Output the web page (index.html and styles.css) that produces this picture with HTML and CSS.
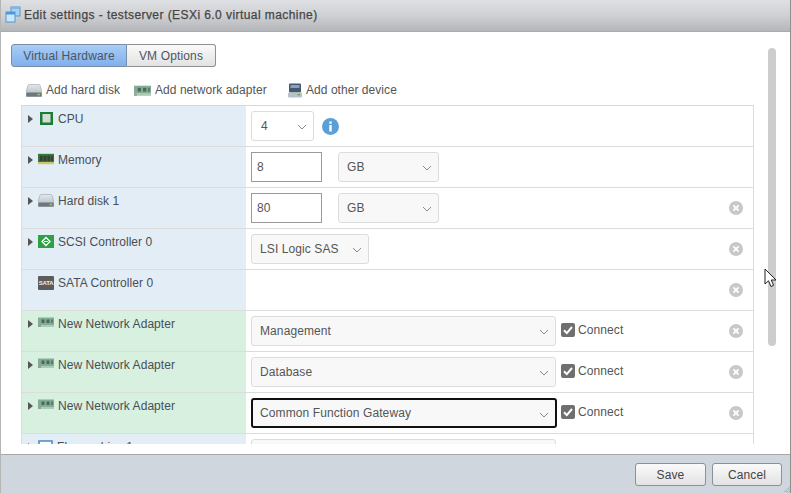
FILE: index.html
```html
<!DOCTYPE html>
<html lang="en">
<head>
<meta charset="utf-8">
<title>Edit settings - testserver</title>
<link rel="stylesheet" href="styles.css">
</head>
<body>
<svg class="defs" width="0" height="0" aria-hidden="true">
  <defs>
    <linearGradient id="diskTop" x1="0" y1="0" x2="0" y2="1"><stop offset="0" stop-color="#e4e8ec"/><stop offset="1" stop-color="#aeb5bc"/></linearGradient>
  </defs>
  <symbol id="chev" viewBox="0 0 10 6"><path d="M1 1l4 4 4-4" fill="none" stroke="#8a8a8a" stroke-width="1"/></symbol>
  <symbol id="nic" viewBox="0 0 16 10">
    <rect x="0" y="0.5" width="16" height="7.5" fill="#7fae93"/><rect x="0" y="8" width="3" height="2" fill="#9a9a9a"/><rect x="3" y="8" width="13" height="2" fill="#a9cdb6"/>
    <rect x="3.5" y="2.5" width="3" height="3.5" fill="#56625d"/><rect x="8.5" y="2.5" width="3" height="3.5" fill="#56625d"/><rect x="13" y="2.5" width="2" height="3.5" fill="#5f7a6a"/>
  </symbol>
  <symbol id="disk" viewBox="0 0 16 13">
    <path d="M3.2.5h9.6c.6 0 1 .3 1.2.8L16 8v3.5c0 .8-.5 1.3-1.2 1.3H1.2C.5 12.800 0 12.300 0 11.500V8l2-6.700C2.200.8 2.600.5 3.200.5z" fill="url(#diskTop)" stroke="#8d949b" stroke-width=".5"/>
    <rect x="0.400" y="8.500" width="15.200" height="4" rx="1" fill="#6d7781"/><rect x="11.500" y="9.800" width="2.500" height="1.500" fill="#8fd05a"/>
  </symbol>
  <symbol id="x" viewBox="0 0 14 14">
    <circle cx="7" cy="7" r="7" fill="#c8c8c8"/><path d="M4.400 4.400l5.200 5.200M9.600 4.400l-5.200 5.200" stroke="#fff" stroke-width="1.800"/>
  </symbol>
  <symbol id="check" viewBox="0 0 14 14">
    <rect width="14" height="14" rx="2" fill="#6f6f6f"/><path d="M3 7.300l2.800 2.800L11 4" fill="none" stroke="#fff" stroke-width="2"/>
  </symbol>
</svg>
<div class="dialog">
  <header class="titlebar">
    <svg class="title-icon" width="16" height="17" viewBox="0 0 16 17"><rect x="6" y="1" width="9" height="9" fill="#a9d2f2" stroke="#4f97d6"/><rect x="1" y="6" width="9" height="10" fill="#cfe6f8" stroke="#4f97d6"/><rect x="1" y="6" width="9" height="2.500" fill="#4f97d6"/><rect x="6" y="1" width="9" height="2" fill="#7cb7e6"/></svg>
    <span class="title-text">Edit settings - testserver (ESXi 6.0 virtual machine)</span>
  </header>
  <main class="content">
    <div class="tabs">
      <button class="tab tab-active">Virtual Hardware</button>
      <button class="tab tab-plain">VM Options</button>
    </div>
    <div class="toolbar">
      <span class="tool tool-disk"><svg width="16" height="13"><use href="#disk"/></svg>Add hard disk</span>
      <span class="tool tool-nic"><svg width="17" height="11"><use href="#nic"/></svg>Add network adapter</span>
      <span class="tool tool-other"><svg width="14" height="15" viewBox="0 0 14 15"><rect x="1" y="0.500" width="12" height="9" rx="1" fill="#44596e"/><rect x="2.500" y="2" width="9" height="3" fill="#8aa0b4"/><rect x="0" y="9.500" width="14" height="5" rx="1" fill="#b9c1c8"/><rect x="9.500" y="11" width="2.500" height="1.500" fill="#6cb33f"/></svg>Add other device</span>
    </div>
    <div class="table">
      <div class="row">
        <div class="label blue"><span class="arrow"></span><svg class="ico" width="13" height="13" viewBox="0 0 13 13"><rect width="13" height="13" fill="#1a7d35"/><rect x="2.500" y="2" width="8" height="8.500" fill="#d5dbd7"/></svg><span>CPU</span></div>
        <div class="cell"><div class="select sel-cpu">4<svg class="chev" width="10" height="6"><use href="#chev"/></svg></div>
          <svg class="info" width="17" height="17" viewBox="0 0 17 17"><circle cx="8.500" cy="8.500" r="8.500" fill="#5b9fd8"/><rect x="7.300" y="7" width="2.400" height="6.500" fill="#fff"/><rect x="7.300" y="3.500" width="2.400" height="2.200" fill="#fff"/></svg>
        </div>
      </div>
      <div class="row">
        <div class="label blue"><span class="arrow"></span><svg class="ico-wide" width="16" height="12" viewBox="0 0 17 12"><rect y="0.500" width="17" height="9" fill="#2f7d32"/><rect x="2" y="2.500" width="3" height="5.500" fill="#3c3c3c"/><rect x="6" y="2.500" width="3" height="5.500" fill="#3c3c3c"/><rect x="10" y="2.500" width="3" height="5.500" fill="#3c3c3c"/><rect x="14" y="2.500" width="2" height="5.500" fill="#3c3c3c"/><rect y="9.500" width="17" height="2" fill="#d8c64a"/></svg><span>Memory</span></div>
        <div class="cell"><div class="input">8</div><div class="select sel-unit">GB<svg class="chev" width="10" height="6"><use href="#chev"/></svg></div></div>
      </div>
      <div class="row">
        <div class="label blue"><span class="arrow"></span><svg class="ico-wide" width="16" height="13"><use href="#disk"/></svg><span>Hard disk 1</span></div>
        <div class="cell"><div class="input">80</div><div class="select sel-unit">GB<svg class="chev" width="10" height="6"><use href="#chev"/></svg></div><svg class="remove" width="14" height="14"><use href="#x"/></svg></div>
      </div>
      <div class="row">
        <div class="label blue"><span class="arrow"></span><svg class="ico-wide" width="16" height="13" viewBox="0 0 16 13"><rect width="16" height="13" fill="#2fa043"/><path d="M8 2.500L4 6.500l4 4 4-4z" fill="none" stroke="#fff" stroke-width="1.300"/><path d="M6 6.500h4" stroke="#fff"/></svg><span>SCSI Controller 0</span></div>
        <div class="cell"><div class="select sel-scsi">LSI Logic SAS<svg class="chev" width="10" height="6"><use href="#chev"/></svg></div><svg class="remove" width="14" height="14"><use href="#x"/></svg></div>
      </div>
      <div class="row">
        <div class="label blue"><span class="arrow arrow-none"></span><span class="sata">SATA</span><span>SATA Controller 0</span></div>
        <div class="cell"><svg class="remove" width="14" height="14"><use href="#x"/></svg></div>
      </div>
      <div class="row">
        <div class="label green"><span class="arrow"></span><svg class="ico-wide" width="16" height="10"><use href="#nic"/></svg><span>New Network Adapter</span></div>
        <div class="cell"><div class="select sel-net">Management<svg class="chev" width="10" height="6"><use href="#chev"/></svg></div><label class="connect"><svg width="14" height="14"><use href="#check"/></svg>Connect</label><svg class="remove" width="14" height="14"><use href="#x"/></svg></div>
      </div>
      <div class="row">
        <div class="label green"><span class="arrow"></span><svg class="ico-wide" width="16" height="10"><use href="#nic"/></svg><span>New Network Adapter</span></div>
        <div class="cell"><div class="select sel-net">Database<svg class="chev" width="10" height="6"><use href="#chev"/></svg></div><label class="connect"><svg width="14" height="14"><use href="#check"/></svg>Connect</label><svg class="remove" width="14" height="14"><use href="#x"/></svg></div>
      </div>
      <div class="row">
        <div class="label green"><span class="arrow"></span><svg class="ico-wide" width="16" height="10"><use href="#nic"/></svg><span>New Network Adapter</span></div>
        <div class="cell"><div class="select sel-net sel-focus">Common Function Gateway<svg class="chev" width="10" height="6"><use href="#chev"/></svg></div><label class="connect"><svg width="14" height="14"><use href="#check"/></svg>Connect</label><svg class="remove" width="14" height="14"><use href="#x"/></svg></div>
      </div>
      <div class="row">
        <div class="label blue"><span class="arrow"></span><svg class="ico-wide" width="15" height="14" viewBox="0 0 15 14"><rect x="1" y="1" width="13" height="12" fill="#fff" stroke="#4a86c8" stroke-width="1.500"/></svg><span>Floppy drive 1</span></div>
        <div class="cell"><div class="select sel-net"></div></div>
      </div>
    </div>
    <div class="scrollbar"></div>
    <svg class="cursor" width="14" height="20" viewBox="0 0 14 20"><path d="M1 1v15l3.500-3.200L7 18.500l2.600-1.200L7.200 12H12z" fill="#fff" stroke="#222" stroke-width="1"/></svg>
  </main>
  <footer class="footer">
    <button class="btn btn-save">Save</button>
    <button class="btn btn-cancel">Cancel</button>
    <svg class="grip" width="7" height="7" viewBox="0 0 7 7"><path d="M6.500 1L1 6.500M6.500 3.500L3.500 6.500M6.500 5.500L5.500 6.500" stroke="#7d8288" stroke-dasharray="1 1"/></svg>
  </footer>
</div>
</body>
</html>
```

FILE: styles.css
```css
* { box-sizing: border-box; }
html, body { margin: 0; padding: 0; }
body { width: 791px; height: 493px; overflow: hidden; font-family: "Liberation Sans", Arial, sans-serif; font-size: 12px; color: #4d4d4d; background: #fff; }
.defs { position: absolute; }
.dialog { width: 791px; height: 493px; display: flex; flex-direction: column; border-left: 1px solid #b5b5b5; border-right: 1px solid #8f8f8f; }
.titlebar { height: 32px; flex: none; display: flex; align-items: center; padding: 0 0 2px 4px; gap: 3px; background: linear-gradient(#dfe0e3, #cfd0d4 50%, #b4b6ba); border-bottom: 1px solid #a9abaf; }
.title-icon { flex: none; }
.title-text { font-size: 12px; font-weight: 400; color: #454545; letter-spacing: .43px; -webkit-text-stroke: .25px #454545; }
.content { position: relative; flex: 1; min-height: 0; overflow: hidden; padding: 12px 0 0 10px; background: #fff; }
.tabs { display: flex; height: 23px; }
.tab { font: 12px "Liberation Sans", Arial, sans-serif; letter-spacing: .15px; color: #4d5560; padding: 0; height: 23px; border: 1px solid #8d9095; }
.tab-active { width: 116px; border-radius: 3px 0 0 3px; background: linear-gradient(#a9cdf6, #7fb0ee); border-color: #7c8ea5; }
.tab-plain { width: 89px; border-left: 0; border-radius: 0 3px 3px 0; background: linear-gradient(#fafafa, #e2e2e2); }
.toolbar { display: flex; height: 38px; align-items: center; padding: 8px 0 0 15px; letter-spacing: .05px; color: #555; }
.tool { display: flex; align-items: center; gap: 4px; }
.tool-disk { width: 108px; }
.tool-nic { width: 154px; }
.table { width: 733px; height: 339px; overflow: hidden; margin-left: 10px; border: 1px solid #dcdcdc; border-bottom: 0; border-top-color: #d8d8d8; }
.row { display: flex; height: 41px; flex: none; border-bottom: 1px solid #dcdcdc; }
.label { width: 224px; flex: none; display: flex; align-items: flex-start; padding: 6px 0 0 6px; letter-spacing: .05px; color: #4a4f55; }
.blue { background: #e2edf5; }
.green { background: #d8f0e0; }
.arrow { flex: none; width: 0; height: 0; margin: 3px 5px 0 0; border-left: 5px solid #555; border-top: 4px solid transparent; border-bottom: 4px solid transparent; }
.arrow-none { visibility: hidden; }
.ico { flex: none; margin: 0 5px 0 2px; }
.ico-wide { flex: none; margin: 0 4px 0 0; }
.sata { flex: none; width: 16px; height: 14px; margin-right: 4px; border-radius: 1px; background: #5c5c5c; color: #eee; font-size: 6px; font-weight: 700; line-height: 14px; text-align: center; letter-spacing: -.2px; }
.cell { position: relative; flex: 1; display: flex; align-items: center; padding: 0 0 0 5px; gap: 16px; }
.select { position: relative; height: 30px; display: flex; align-items: center; padding-left: 8px; border: 1px solid #dcdcdc; border-radius: 3px; background: #f8f8f8; letter-spacing: .1px; color: #555; flex: none; }
.chev { position: absolute; right: 6px; top: 12px; }
.sel-cpu { width: 63px; background: #fff; padding-left: 9px; }
.sel-unit { width: 101px; }
.sel-scsi { width: 118px; }
.sel-net { width: 305px; }
.sel-focus { width: 306px; margin-right: -1px; border: 2px solid #111; padding-left: 7px; }
.input { width: 71px; height: 30px; flex: none; display: flex; align-items: center; padding-left: 5px; border: 1px solid #9a9a9a; background: #fff; color: #555; letter-spacing: .1px; }
.info { flex: none; margin-left: -8px; }
.connect { display: flex; align-items: center; gap: 3px; margin-left: -11px; letter-spacing: .1px; color: #555; transform: translateY(-1px); }
.remove { position: absolute; right: 10px; top: 13px; }
.scrollbar { position: absolute; left: 767px; top: 16px; width: 8px; height: 298px; border-radius: 4px; background: #cdcdcd; }
.cursor { position: absolute; left: 763px; top: 236px; }
.footer { position: relative; height: 39px; flex: none; display: flex; justify-content: flex-end; align-items: flex-start; gap: 6px; padding: 8px 8px 0 0; background: #d0d6dd; border-top: 1px solid #a8a8a8; }
.btn { font: 12px "Liberation Sans", Arial, sans-serif; letter-spacing: .1px; color: #444; height: 23px; padding: 0; border: 1px solid #8d9095; border-radius: 3px; background: linear-gradient(#fafafa, #e2e2e2); }
.btn-save { width: 71px; }
.btn-cancel { width: 70px; }
.grip { position: absolute; right: 0; bottom: 0; }
```
